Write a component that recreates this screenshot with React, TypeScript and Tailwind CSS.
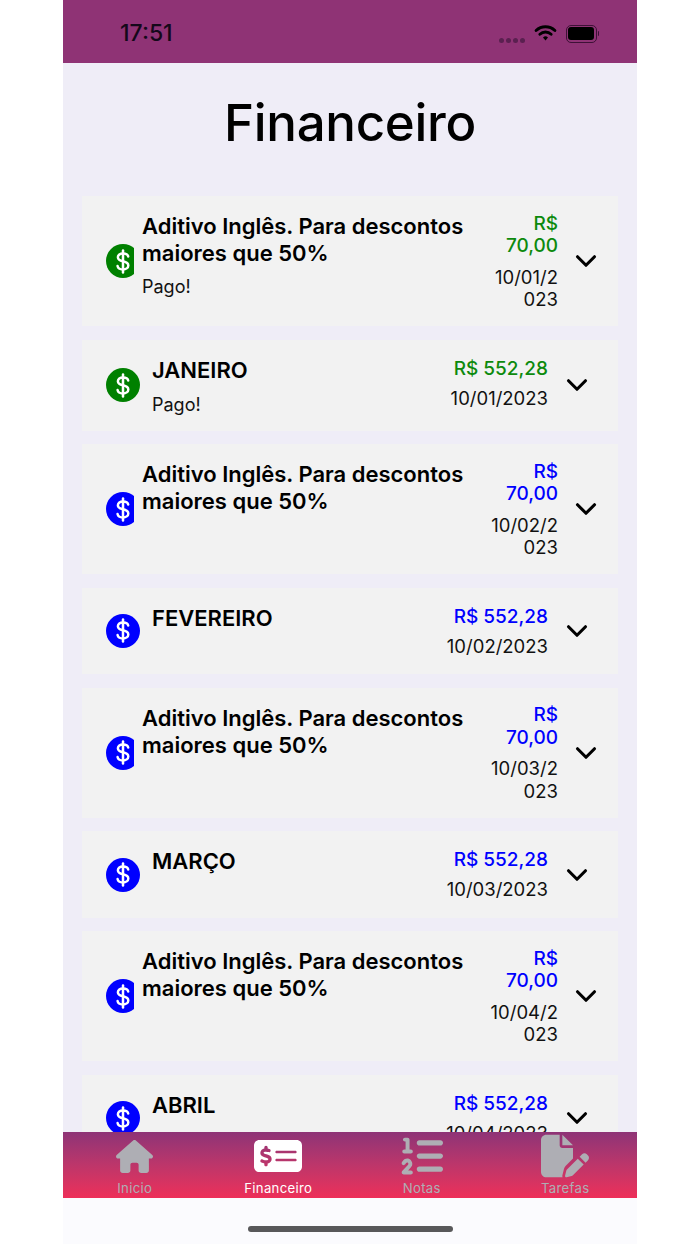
import React from 'react';
import { ChevronDown } from 'lucide-react';
import { FaFilePen, FaHouse, FaListOl, FaMoneyCheckDollar } from 'react-icons/fa6';

interface Payment {
  title: string;
  price: string;
  date: string;
  paid?: boolean;
  extra?: boolean;
}

const payments: Payment[] = [
  { title: 'Aditivo Inglês. Para descontos maiores que 50%', price: 'R$ 70,00', date: '10/01/2023', paid: true, extra: true },
  { title: 'JANEIRO', price: 'R$ 552,28', date: '10/01/2023', paid: true },
  { title: 'Aditivo Inglês. Para descontos maiores que 50%', price: 'R$ 70,00', date: '10/02/2023', extra: true },
  { title: 'FEVEREIRO', price: 'R$ 552,28', date: '10/02/2023' },
  { title: 'Aditivo Inglês. Para descontos maiores que 50%', price: 'R$ 70,00', date: '10/03/2023', extra: true },
  { title: 'MARÇO', price: 'R$ 552,28', date: '10/03/2023' },
  { title: 'Aditivo Inglês. Para descontos maiores que 50%', price: 'R$ 70,00', date: '10/04/2023', extra: true },
  { title: 'ABRIL', price: 'R$ 552,28', date: '10/04/2023' },
];

const CoinIcon = ({ paid }: { paid?: boolean }) => (
  <div className={`flex w-[34px] h-[34px] shrink-0 items-center justify-center rounded-full ${paid ? 'bg-[#008000]' : 'bg-[#0000ff]'}`}>
    <svg width="14" height="25" viewBox="0 0 14 25" fill="none" stroke="#fff" strokeWidth="2.5" strokeLinecap="round">
      <path d="M7 1.5v22" />
      <path d="M12.2 7.4C11.8 5.4 9.8 4.4 7 4.4 4 4.4 1.9 6 1.9 8.3c0 2.5 2.2 3.4 5.1 4 2.9.7 5.3 1.6 5.3 4.2 0 2.4-2.3 3.9-5.3 3.9-2.9 0-5-1.1-5.4-3.3" />
    </svg>
  </div>
);

const PaymentCard = ({ payment }: { payment: Payment }) => {
  const color = payment.paid ? 'text-[#0d8a0d]' : 'text-[#0000ff]';

  if (payment.extra) {
    return (
      <div className="flex h-[130px] shrink-0 items-center bg-[#f2f2f2] pl-[24px]">
        <div className="w-[28px] shrink-0 overflow-hidden">
          <CoinIcon paid={payment.paid} />
        </div>
        <div className="ml-[8px] w-[336px] self-start pt-[17px]">
          <p className="text-[22px] leading-[27px] font-semibold text-black">{payment.title}</p>
          {payment.paid && <p className="mt-[8px] text-[18px] leading-[24px] text-[#111]">Pago!</p>}
        </div>
        <div className="ml-[10px] w-[70px] shrink-0 self-start pt-[16.5px] text-right">
          <p className={`text-[19px] leading-[22.5px] font-medium ${color}`}>{payment.price}</p>
          <p className="mt-[8px] text-[18.5px] leading-[22.5px] break-all text-[#111]">{payment.date}</p>
        </div>
        <ChevronDown size={34} strokeWidth={2.2} className="ml-[11px] shrink-0 text-black" />
      </div>
    );
  }

  return (
    <div className={`flex shrink-0 items-center bg-[#f2f2f2] pl-[24px] ${payment.paid ? 'h-[91px]' : 'h-[86.4px]'}`}>
      <CoinIcon paid={payment.paid} />
      <div className="ml-[12px] flex-1 self-start pt-[17px]">
        <p className="text-[22px] leading-[27px] font-semibold text-black">{payment.title}</p>
        {payment.paid && <p className="mt-[9px] text-[18px] leading-[24px] text-[#111]">Pago!</p>}
      </div>
      <div className="self-start pt-[17px] text-right">
        <p className={`text-[19px] leading-[23px] font-medium ${color}`}>{payment.price}</p>
        <p className="mt-[7px] text-[18.5px] leading-[23px] text-[#111]">{payment.date}</p>
      </div>
      <ChevronDown size={34} strokeWidth={2.2} className="mr-[24px] ml-[12px] shrink-0 text-black" />
    </div>
  );
};

const tabs = [
  { label: 'Inicio', icon: FaHouse, size: 37 },
  { label: 'Financeiro', icon: FaMoneyCheckDollar, size: 48, active: true },
  { label: 'Notas', icon: FaListOl, size: 42 },
  { label: 'Tarefas', icon: FaFilePen, size: 48 },
];

export default function App() {
  return (
    <div className="flex h-[1244px] w-[700px] justify-center overflow-hidden bg-white font-['Inter',sans-serif]">
      <div className="flex w-[574px] flex-col">
        {/* status bar */}
        <div className="flex h-[63px] shrink-0 items-center bg-[#8f3375] pt-[4px] pr-[38px] pl-[57px]">
          <span className="text-[23px] font-medium text-[#14081a]">17:51</span>
          <div className="ml-auto flex items-center">
            <div className="mt-[13px] mr-[9px] flex gap-[2px]">
              <span className="h-[5px] w-[5px] rounded-full bg-[#5a2050]" />
              <span className="h-[5px] w-[5px] rounded-full bg-[#5a2050]" />
              <span className="h-[5px] w-[5px] rounded-full bg-[#5a2050]" />
              <span className="h-[5px] w-[5px] rounded-full bg-[#5a2050]" />
            </div>
            <svg className="mt-[-2px]" width="23" height="18" viewBox="0 0 22 16" fill="none" stroke="#000" strokeWidth="2.8" strokeLinecap="round">
              <path d="M2 5.6a13 13 0 0 1 18 0" />
              <path d="M5.6 9.2a8 8 0 0 1 10.8 0" />
              <path d="M11 15.2l-2.4-2.8a3.4 3.4 0 0 1 4.8 0z" fill="#000" stroke="none" />
            </svg>
            <div className="ml-[9px] flex items-center">
              <div className="h-[18px] w-[31px] rounded-[5px] border border-[#3d1136] p-[1.5px]">
                <div className="h-full w-full rounded-[3px] bg-black" />
              </div>
              <div className="ml-[1px] h-[5px] w-[1.5px] rounded-r bg-[#3d1136]" />
            </div>
          </div>
        </div>

        {/* content */}
        <div className="min-h-0 flex-1 overflow-hidden bg-[#efedf7]">
          <h1 className="mt-[27px] text-center text-[51px] leading-[66px] font-medium tracking-[-0.3px] text-black">Financeiro</h1>
          <div className="mt-[40px] flex flex-col gap-[13.6px] px-[19px]">
            {payments.map((payment, i) => (
              <PaymentCard key={i} payment={payment} />
            ))}
          </div>
        </div>

        {/* tab bar */}
        <div className="grid h-[66px] shrink-0 grid-cols-4 bg-gradient-to-b from-[#8e3376] to-[#ee2e58]">
          {tabs.map(tab => (
            <div key={tab.label} className={`flex flex-col items-center ${tab.active ? 'text-white' : 'text-[#aeaeb4]'}`}>
              <div className="flex h-[48px] items-center justify-center">
                <tab.icon size={tab.size} />
              </div>
              <span className="text-[13.2px] leading-[16px] tracking-[0.3px]">{tab.label}</span>
            </div>
          ))}
        </div>

        {/* home indicator */}
        <div className="flex h-[46px] shrink-0 justify-center bg-[#fbfbfe] pt-[28px]">
          <div className="h-[6px] w-[205px] rounded-full bg-[#58585a]" />
        </div>
      </div>
    </div>
  );
}
